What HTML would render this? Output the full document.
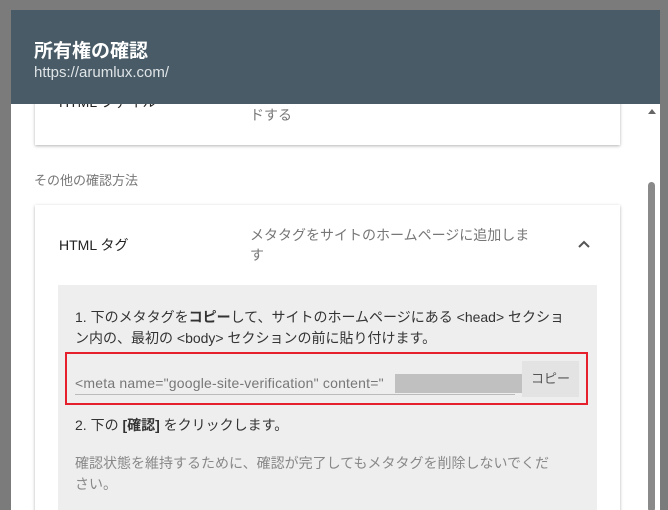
<!DOCTYPE html>
<html><head><meta charset="utf-8"><style>
body{margin:0;width:668px;height:498px;overflow:hidden;background:#7b7b7b;font-family:"Liberation Sans","Noto Sans CJK JP",sans-serif;position:relative}
.dlg{position:absolute;left:11px;top:10px;width:649px;height:500px;background:#fff;overflow:hidden}
.hd{position:absolute;left:0;top:0;width:649px;height:94px;background:#485b66;color:#fff;z-index:2}
.hd .t{position:absolute;left:23px;top:26px;font-size:19px;font-weight:bold}
.hd .u{position:absolute;left:23px;top:54px;font-size:15px;color:#dfe4e7}
.card{position:absolute;left:24px;width:585px;background:#fff;box-shadow:0 1px 3px rgba(0,0,0,.3)}
.a{position:absolute;font-size:14px;color:#222}
.g{color:#777}
</style></head><body>
<div class="dlg">
<div class="hd"><div class="t">所有権の確認</div><div class="u">https://arumlux.com/</div></div>
<div class="card" style="top:60px;height:75px"><div class="a" style="left:24px;top:22px">HTML ファイル</div><div class="a g" style="left:215px;top:35px">ドする</div></div>
<div class="a g" style="left:23px;top:160px;font-size:13px">その他の確認方法</div>
<div class="card" style="top:195px;height:320px">
<div class="a" style="left:24px;top:30px">HTML タグ</div>
<div class="a g" style="left:215px;top:20px;line-height:20px;width:320px">メタタグをサイトのホームページに追加しま<br>す</div>
<svg style="position:absolute;left:542px;top:34px" width="14" height="10"><path d="M2 8 L7 3 L12 8" stroke="#555" stroke-width="2" fill="none"/></svg>
<div style="position:absolute;left:23px;top:80px;width:539px;height:240px;background:#eeeeee">
<div class="a" style="left:17px;top:22px;line-height:21px;width:500px;color:#333">1. 下のメタタグを<b>コピー</b>して、サイトのホームページにある &lt;head&gt; セクション内の、最初の &lt;body&gt; セクションの前に貼り付けます。</div>
<div style="position:absolute;left:17px;top:109px;width:440px;height:1px;background:#bbb"></div>
<div class="a g" style="left:17px;top:90px;font-size:14px;letter-spacing:0.2px">&lt;meta name="google-site-verification" content="</div>
<div style="position:absolute;left:337px;top:89px;width:127px;height:19px;background:#c0c0c0"></div>
<div style="position:absolute;left:464px;top:76px;width:57px;height:36px;background:#e3e3e3;font-size:13px;color:#555;text-align:center;line-height:36px">コピー</div>
<div class="a" style="left:17px;top:130px;color:#333">2. 下の <b>[確認]</b> をクリックします。</div>
<div class="a g" style="left:17px;top:168px;line-height:21px;width:485px;color:#888">確認状態を維持するために、確認が完了してもメタタグを削除しないでください。</div>
</div></div>
<svg style="position:absolute;left:636px;top:97px" width="10" height="8"><path d="M1 7 L5 2 L9 7Z" fill="#666"/></svg>
<div style="position:absolute;left:637px;top:172px;width:7px;height:330px;background:#8a8a8a;border-radius:4px"></div>
</div>
<div style="position:absolute;left:65px;top:352px;width:519px;height:49px;border:2px solid #e5202c"></div>
</body></html>
